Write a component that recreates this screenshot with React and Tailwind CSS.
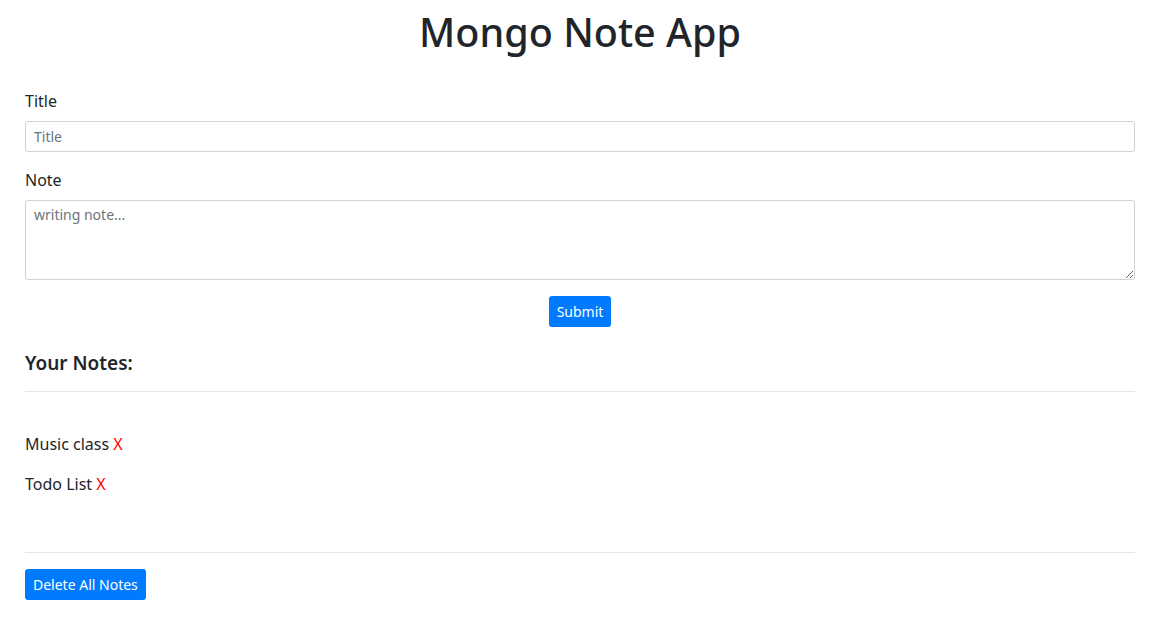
import React, { useState } from "react";

const FONT = "font-['Segoe_UI','Noto_Sans',sans-serif]";

export default function App() {
  const [notes] = useState([
    { id: 1, title: "Music class" },
    { id: 2, title: "Todo List" },
  ]);

  return (
    <div className={`min-h-screen bg-white text-[#212529] text-base ${FONT}`}>
      <div className="w-[1110px] ml-[25px] pt-[8px]">
        {/* Header */}
        <h1 className="text-center text-[39.5px] leading-[48px] font-medium mb-[33px]">
          Mongo Note App
        </h1>

        {/* Form */}
        <div className="mb-4">
          <label className="block mb-2 leading-6">Title</label>
          <input
            type="text"
            placeholder="Title"
            className="block w-full h-[31px] px-2 text-sm border border-[#ced4da] rounded-[3px] placeholder:text-[#6c757d] outline-none"
          />
        </div>
        <div className="mb-4">
          <label className="block mb-2 leading-6">Note</label>
          <textarea
            placeholder="writing note..."
            className="block w-full h-[80px] px-2 py-1 text-sm border border-[#ced4da] rounded-[3px] placeholder:text-[#6c757d] outline-none"
          />
        </div>
        <div className="flex justify-center">
          <button className="h-[31px] px-2 text-sm text-white bg-[#007bff] rounded-[3px]">
            Submit
          </button>
        </div>

        {/* Notes */}
        <h5 className="mt-[24px] text-[19px] leading-6 font-semibold">Your Notes:</h5>
        <hr className="my-4 border-t border-[#e5e5e5]" />
        <div className="pt-6 pb-10">
          {notes.map((note) => (
            <p key={note.id} className="leading-6 mb-4">
              {note.title} <span className="text-[#ff0000] cursor-pointer">X</span>
            </p>
          ))}
        </div>
        <hr className="mb-4 border-t border-[#e5e5e5]" />
        <button className="h-[31px] px-2 text-sm text-white bg-[#007bff] rounded-[3px]">
          Delete All Notes
        </button>
      </div>
    </div>
  );
}
